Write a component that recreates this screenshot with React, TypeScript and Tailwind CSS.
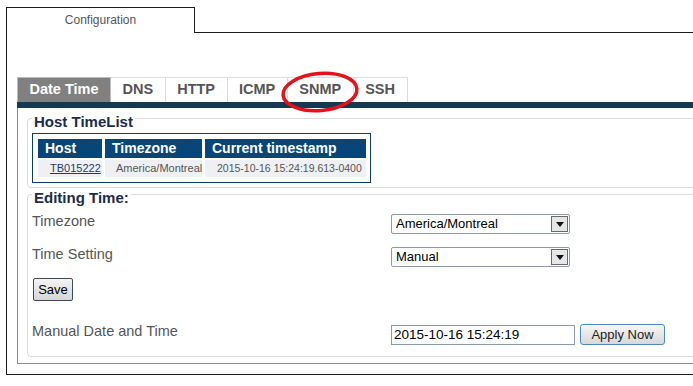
const tabs = ["Date Time", "DNS", "HTTP", "ICMP", "SNMP", "SSH"];

function Tabs() {
  return (
    <div className="relative flex h-[25px]">
      {tabs.map((t, i) => (
        <div
          key={t}
          className={
            i === 0
              ? "flex items-center px-[11.5px] border-t border-l border-r border-[#bdbdbd] bg-[#808080] text-white font-bold text-[14.5px]"
              : "flex items-center px-[11.5px] border-t border-r border-[#dcdcdc] bg-white text-[#555] font-bold text-[14.5px]"
          }
        >
          {t}
        </div>
      ))}
      <svg
        className="absolute left-[262px] top-[-7px]"
        width="82"
        height="44"
        viewBox="0 0 82 44"
      >
        <ellipse
          cx="41"
          cy="22"
          rx="37"
          ry="18.5"
          fill="none"
          stroke="#e3121b"
          strokeWidth="3.5"
          transform="rotate(-5 41 22)"
        />
      </svg>
    </div>
  );
}

function Select({ value }: { value: string }) {
  return (
    <div className="flex items-center justify-between w-[179px] h-[20px] border border-[#8a9aaa] rounded-[2px] bg-white pl-[4px] pr-[1px] text-[13px] text-black">
      <span>{value}</span>
      <div className="flex items-center justify-center w-[17px] h-[16px] border border-[#6a6a6a] bg-[#e6e6e6]">
        <svg width="8" height="5" viewBox="0 0 8 5">
          <path d="M0 0 H8 L4 5 Z" fill="#111" />
        </svg>
      </div>
    </div>
  );
}

export default function App() {
  return (
    <div className="w-[693px] h-[386px] overflow-hidden bg-white font-['Liberation_Sans',Arial,sans-serif]">
      <div className="w-[800px] pt-[7px] pl-[6px]">
        <div className="flex">
          <div className="w-[189px] h-[26px] border-t border-l border-r border-[#1c1c1c] flex justify-center pt-[5px] text-[12px] leading-[14px] text-[#555]">
            Configuration
          </div>
          <div className="flex-1 border-b border-[#1c1c1c]" />
        </div>
        <div className="border-l border-b border-[#1c1c1c] pl-[10px] pt-[44px] pb-[10px]">
          <Tabs />
          <div className="h-[6px] bg-[#123a52]" />
          <div className="border-l border-b border-[#8c8c8c] pl-[9px] pt-[4px] pb-[6px]">
            <fieldset className="border border-[#d8dcdf] rounded-[4px] pb-[4px]">
              <legend className="ml-[4px] px-[2px] pt-[7px] leading-[5px] text-[15px] font-bold text-[#1b2d4a]">
                Host TimeList
              </legend>
              <div className="ml-[4px] mt-[9px] w-[339px] border border-[#0e3d5c] p-[5px]">
                <div className="grid grid-cols-[64px_97px_161px] gap-x-[3px] gap-y-[2px] whitespace-nowrap">
                  {["Host", "Timezone", "Current timestamp"].map((h) => (
                    <div
                      key={h}
                      className="h-[19px] flex items-center pl-[7px] bg-[#08467a] text-white font-bold text-[14px]"
                    >
                      {h}
                    </div>
                  ))}
                  <div className="h-[17px] flex items-center pl-[12px] bg-[#eef0f3] text-[11px] text-[#1e3d6e] underline">
                    TB015222
                  </div>
                  <div className="h-[17px] flex items-center pl-[11px] bg-[#eef0f3] text-[11px] text-[#555]">
                    America/Montreal
                  </div>
                  <div className="h-[17px] flex items-center pl-[12px] bg-[#eef0f3] text-[10.5px] text-[#555]">
                    2015-10-16 15:24:19.613-0400
                  </div>
                </div>
              </div>
            </fieldset>
            <fieldset className="border border-[#d8dcdf] rounded-[4px] pb-[11px]">
              <legend className="ml-[4px] px-[2px] pt-[7px] leading-[5px] text-[15px] font-bold text-[#1b2d4a]">
                Editing Time:
              </legend>
              <div className="flex flex-col pl-[4px] pt-[14px] text-[14.5px] text-[#555]">
                <div className="flex items-start h-[20px]">
                  <span className="w-[359px] leading-[15px]">Timezone</span>
                  <Select value="America/Montreal" />
                </div>
                <div className="flex items-start h-[20px] mt-[13px]">
                  <span className="w-[359px] leading-[15px]">Time Setting</span>
                  <Select value="Manual" />
                </div>
                <div className="mt-[11px] pl-[1px]">
                  <button className="w-[40px] h-[23px] border border-[#3a4a5c] rounded-[2px] bg-gradient-to-b from-[#f4f4f4] to-[#d6d6d6] text-[13px] text-black">
                    Save
                  </button>
                </div>
                <div className="flex items-start mt-[23px] h-[21px]">
                  <span className="w-[359px] leading-[14px]">Manual Date and Time</span>
                  <div className="mt-[1px] w-[184px] h-[20px] border border-[#8a9aaa] flex items-center pl-[2px] text-[13.5px] text-black">
                    2015-10-16 15:24:19
                  </div>
                  <button className="ml-[5px] w-[85px] h-[21px] border border-[#4a8ac0] rounded-[3px] bg-gradient-to-b from-[#f7f7f7] to-[#d8d8d8] text-[13px] text-[#222]">
                    Apply Now
                  </button>
                </div>
              </div>
            </fieldset>
          </div>
        </div>
      </div>
    </div>
  );
}
